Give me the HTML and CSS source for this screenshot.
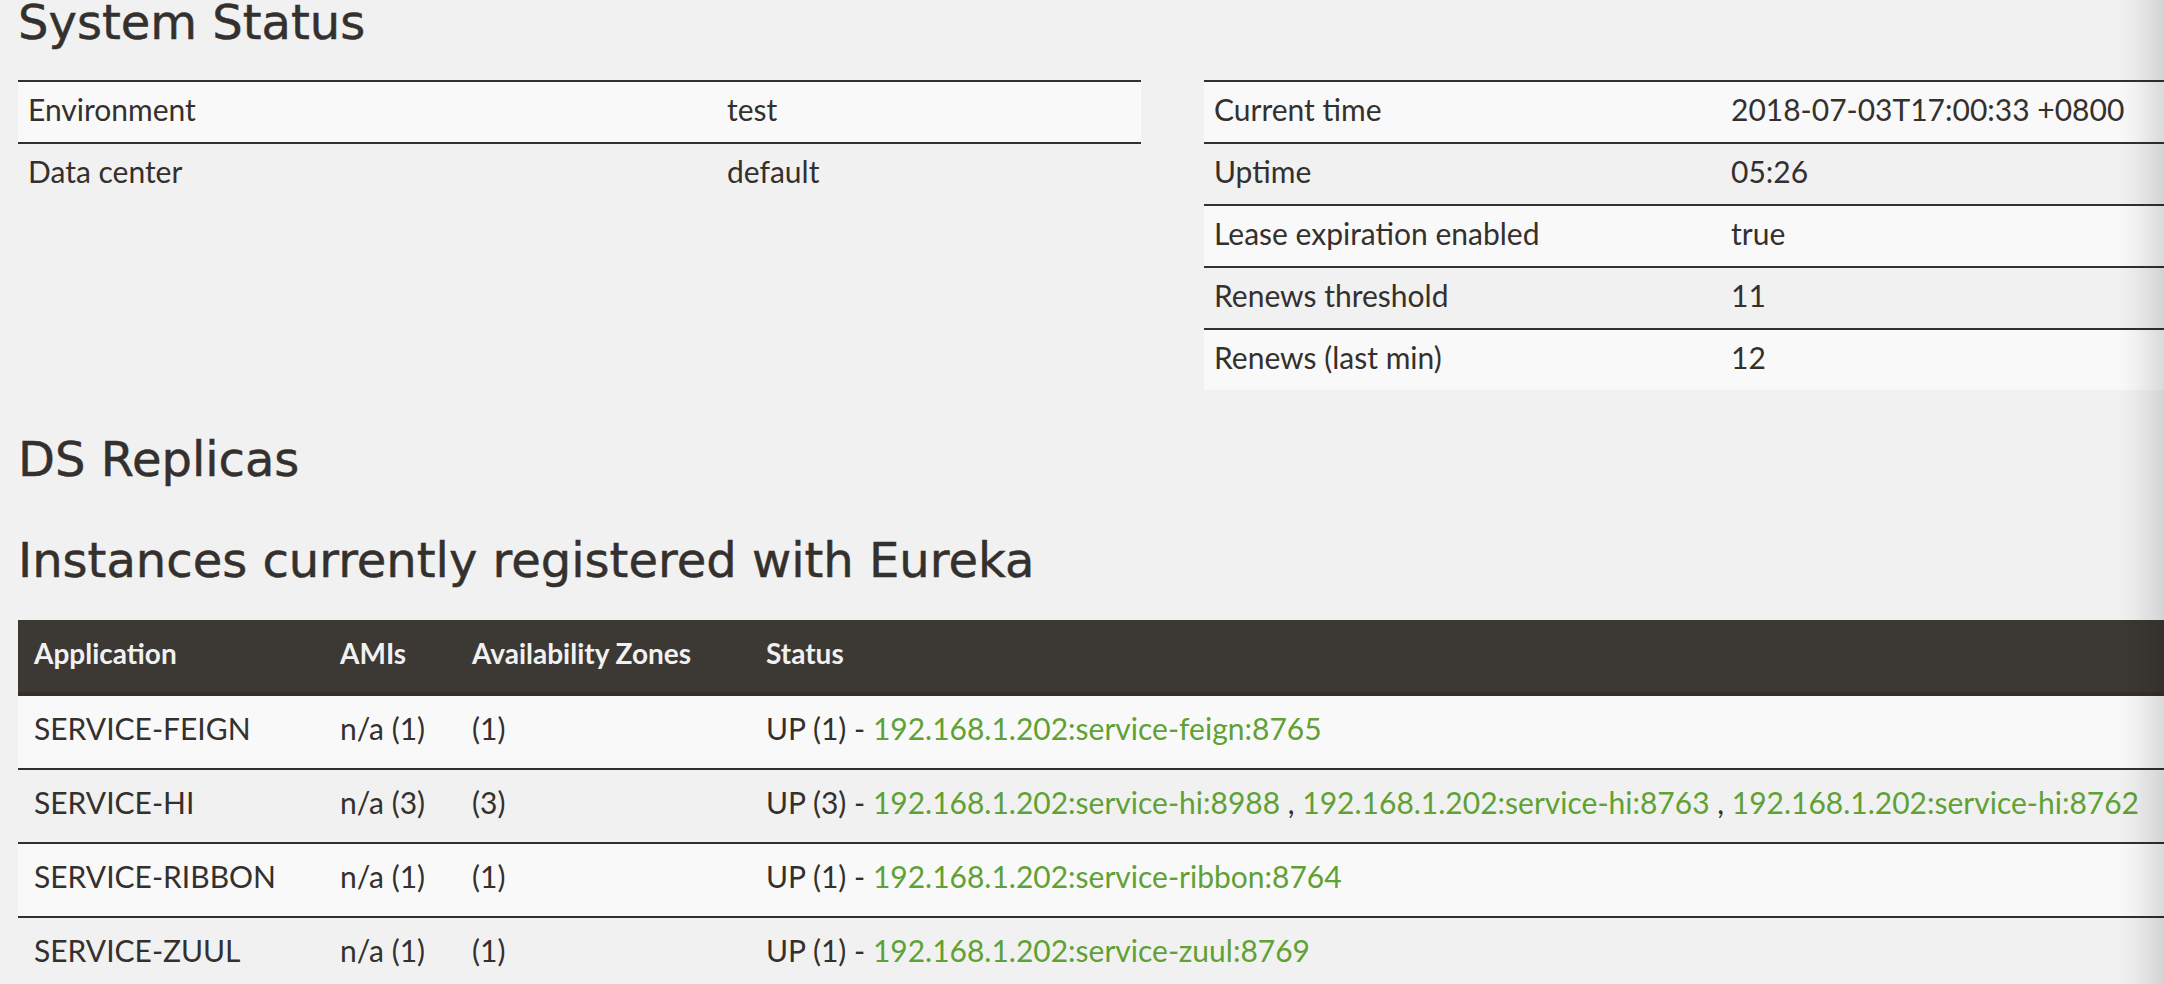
FILE: index.html
```html
<!DOCTYPE html>
<html lang="en">
<head>
<meta charset="utf-8">
<title>Eureka</title>
<link rel="stylesheet" href="styles.css">
</head>
<body>
<div class="page">
  <h2 class="title title-first">System Status</h2>
  <div class="status-row">
    <table class="kv kv-left">
      <tbody>
        <tr><td class="k">Environment</td><td>test</td></tr>
        <tr><td class="k">Data center</td><td>default</td></tr>
      </tbody>
    </table>
    <table class="kv kv-right">
      <tbody>
        <tr><td class="k">Current time</td><td>2018-07-03T17:00:33 +0800</td></tr>
        <tr><td class="k">Uptime</td><td>05:26</td></tr>
        <tr><td class="k">Lease expiration enabled</td><td>true</td></tr>
        <tr><td class="k">Renews threshold</td><td>11</td></tr>
        <tr><td class="k">Renews (last min)</td><td>12</td></tr>
      </tbody>
    </table>
  </div>
  <h2 class="title title-ds">DS Replicas</h2>
  <h2 class="title title-inst">Instances currently registered with Eureka</h2>
  <table class="instances">
    <thead>
      <tr><th class="c-app">Application</th><th class="c-ami">AMIs</th><th class="c-zone">Availability Zones</th><th>Status</th></tr>
    </thead>
    <tbody>
      <tr><td><b class="app">SERVICE-FEIGN</b></td><td>n/a (1)</td><td>(1)</td><td><b class="up">UP (1) - </b><a href="#">192.168.1.202:service-feign:8765</a></td></tr>
      <tr><td><b class="app">SERVICE-HI</b></td><td>n/a (3)</td><td>(3)</td><td><b class="up">UP (3) - </b><a href="#">192.168.1.202:service-hi:8988</a> , <a href="#">192.168.1.202:service-hi:8763</a> , <a href="#">192.168.1.202:service-hi:8762</a></td></tr>
      <tr><td><b class="app">SERVICE-RIBBON</b></td><td>n/a (1)</td><td>(1)</td><td><b class="up">UP (1) - </b><a href="#">192.168.1.202:service-ribbon:8764</a></td></tr>
      <tr><td><b class="app">SERVICE-ZUUL</b></td><td>n/a (1)</td><td>(1)</td><td><b class="up">UP (1) - </b><a href="#">192.168.1.202:service-zuul:8769</a></td></tr>
    </tbody>
  </table>
</div>
<div class="edge-shadow"></div>
</body>
</html>
```
FILE: styles.css
```css
html, body {
  margin: 0;
  padding: 0;
  overflow: hidden;
  background: #f1f1f1;
}
body {
  color: #34302d;
  font-family: Lato, "Open Sans", sans-serif;
  font-size: 30px;
}
.page {
  width: 2346px;
  padding-left: 18px;
  box-sizing: border-box;
}
.title {
  font-family: "DejaVu Sans", sans-serif;
  font-weight: normal;
  font-size: 48px;
  line-height: 48px;
  margin: 0;
  color: #34302d;
  white-space: nowrap;
  -webkit-text-stroke: 0.5px #34302d;
}
.title-first { line-height: 44px; margin-bottom: 36px; }
.title-ds { margin-top: 45px; }
.title-inst { margin-top: 53px; margin-bottom: 36px; }

.status-row {
  display: flex;
  gap: 63px;
  align-items: flex-start;
}
.kv {
  width: 1123px;
  border-collapse: collapse;
  table-layout: fixed;
}
.kv td {
  border-top: 2px solid #34302d;
  padding: 9px 10px 15px;
  line-height: 36px;
  white-space: nowrap;
  text-align: left;
}
.kv tr:nth-child(odd) td { background: #f9f9f9; }
.kv-left .k { width: 679px; }
.kv-right .k { width: 497px; }

.instances {
  width: 2309px;
  border-collapse: collapse;
  table-layout: fixed;
}
.instances th {
  background: #3c3834;
  color: #f1f1f1;
  font-weight: 700;
  font-size: 28px;
  line-height: 36px;
  padding: 15px 16px 21px;
  border-bottom: 4px solid #34302d;
  text-align: left;
  white-space: nowrap;
}
.c-app { width: 274px; }
.c-ami { width: 100px; }
.c-zone { width: 262px; }
.instances td {
  padding: 14px 16px 22px;
  line-height: 36px;
  white-space: nowrap;
  border-top: 2px solid #34302d;
}
.instances tbody tr:first-child td { border-top: 0; }
.instances tbody tr:nth-child(odd) td { background: #f9f9f9; }
.app, .up { font-weight: normal; }
.instances a {
  color: #5fa134;
  text-decoration: none;
}
.edge-shadow {
  position: fixed;
  top: 0;
  right: 0;
  width: 46px;
  height: 100%;
  background: linear-gradient(to right, rgba(0,0,0,0), rgba(0,0,0,0.03) 40%, rgba(0,0,0,0.12));
  pointer-events: none;
}
```
